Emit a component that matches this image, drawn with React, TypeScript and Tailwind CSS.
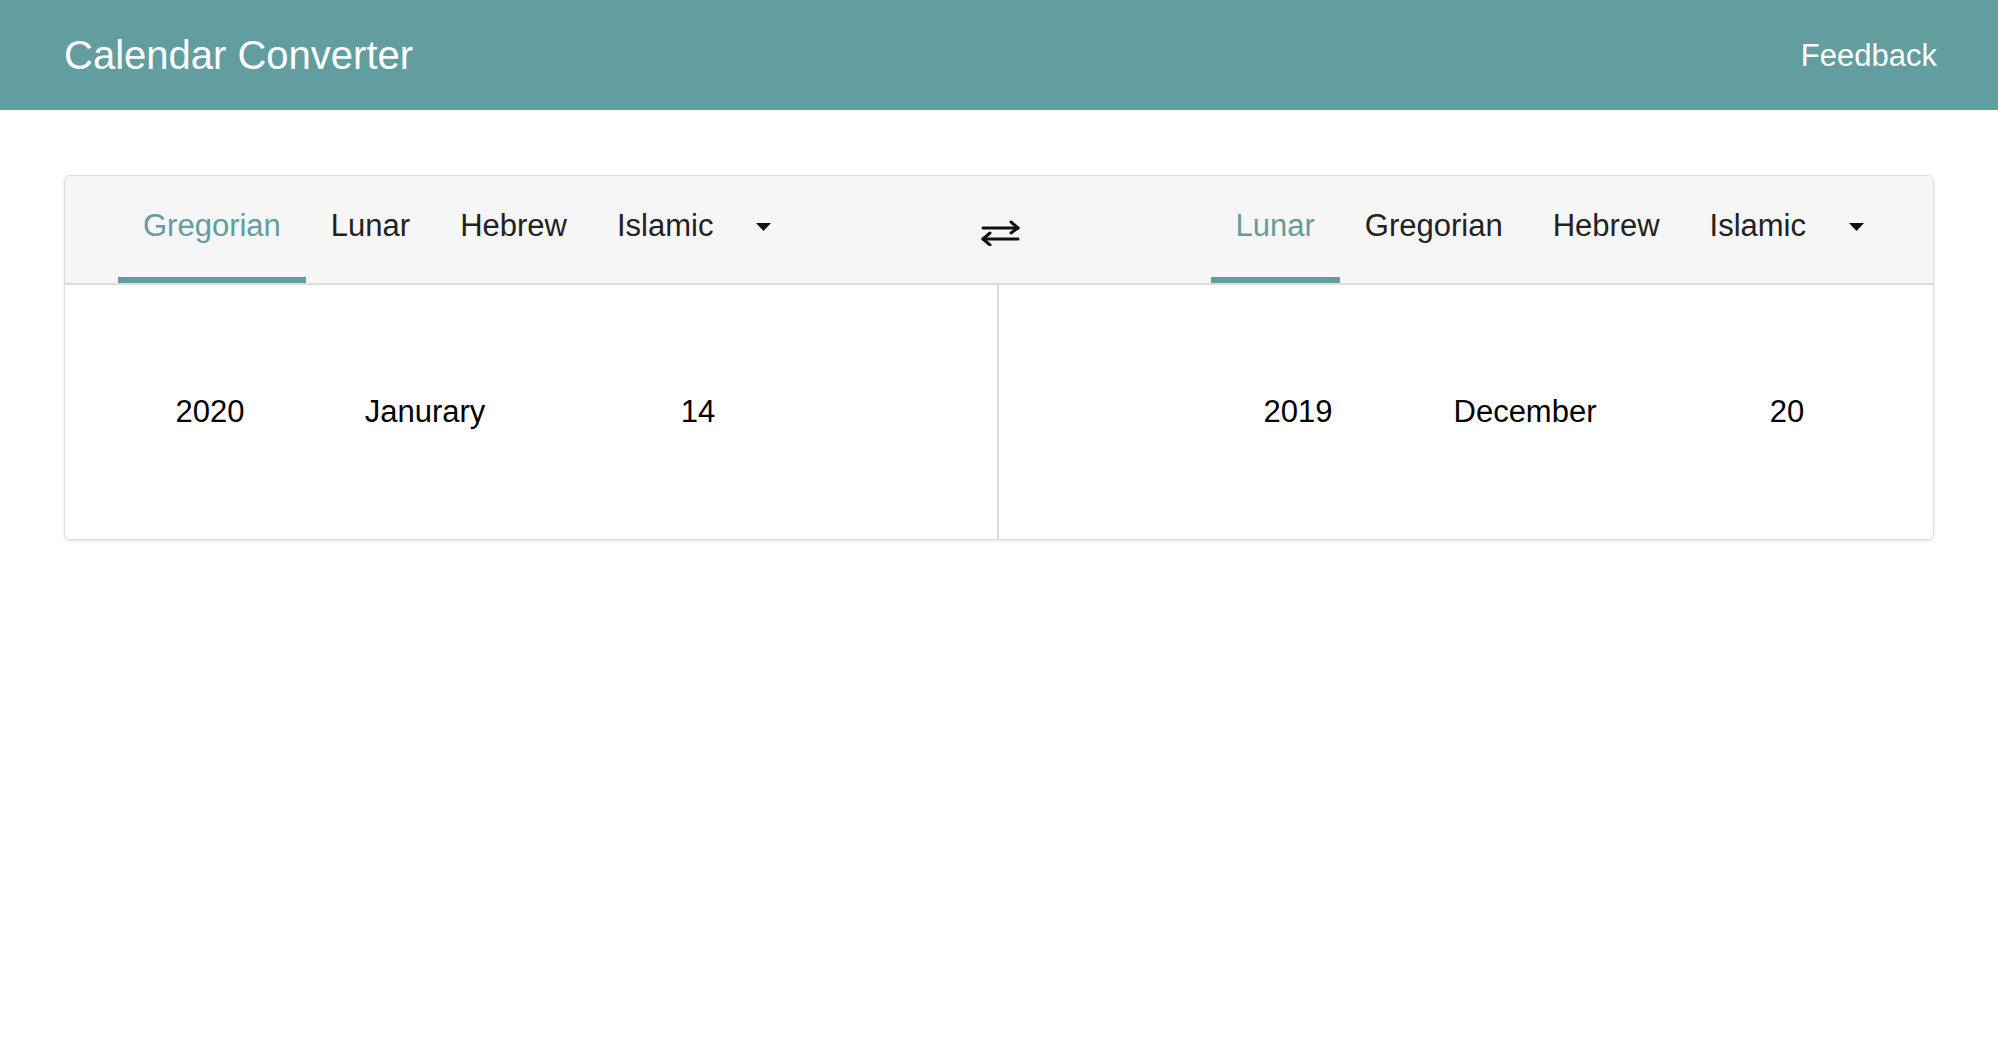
import React from 'react'

function Caret() {
  return (
    <svg width="15" height="8" viewBox="0 0 15 8">
      <polygon points="0,0 15,0 7.5,8" fill="#111" />
    </svg>
  )
}

function SwapIcon() {
  return (
    <svg width="41" height="26" viewBox="0 0 41 26" fill="none" stroke="#111" strokeWidth="3" strokeLinecap="round" strokeLinejoin="round">
      <path d="M3 8 H38" />
      <path d="M31 2 L38 8 L31 13" />
      <path d="M3 19 H38" />
      <path d="M10 13 L3 19 L10 25" />
    </svg>
  )
}

function TabGroup({ tabs }: { tabs: string[] }) {
  return (
    <div className="flex h-full">
      {tabs.map((t, i) => (
        <div
          key={t}
          className={
            i === 0
              ? 'flex items-center px-[25px] border-b-[6px] border-[#629e9f] text-[#629e9f]'
              : 'flex items-center px-[25px] border-b-[6px] border-transparent text-[#222]'
          }
        >
          {t}
        </div>
      ))}
      <div className="flex items-center px-[18px] border-b-[6px] border-transparent">
        <Caret />
      </div>
    </div>
  )
}

export default function App() {
  return (
    <div className="min-h-screen bg-white font-['Liberation_Sans',Arial,sans-serif]">
      <header className="h-[110px] bg-[#629e9f] flex items-center justify-between pl-16 pr-[61px] text-white">
        <h1 className="text-[40px] leading-none">Calendar Converter</h1>
        <a href="#" className="text-[31px] leading-none">
          Feedback
        </a>
      </header>

      <main className="px-16 pt-[65px]">
        <div className="rounded-md border border-[#dcdcdc] shadow-[0_1px_3px_rgba(0,0,0,0.12)] overflow-hidden">
          <div className="h-[109px] bg-[#f6f6f6] border-b-2 border-[#dcdcdc] flex items-stretch justify-between pl-[53px] pr-[51px] text-[31px]">
            <TabGroup tabs={['Gregorian', 'Lunar', 'Hebrew', 'Islamic']} />
            <div className="flex items-center pt-[6px]">
              <SwapIcon />
            </div>
            <TabGroup tabs={['Lunar', 'Gregorian', 'Hebrew', 'Islamic']} />
          </div>

          <div className="grid grid-cols-2 h-[254px] text-[31px] text-black">
            <div className="flex items-center pl-[75px] border-r-2 border-[#dcdcdc]">
              <div className="w-[140px] text-center">2020</div>
              <div className="w-[140px] ml-[75px] text-center">Janurary</div>
              <div className="w-[140px] ml-[133px] text-center">14</div>
            </div>
            <div className="flex items-center pl-[219px]">
              <div className="w-[160px] text-center">2019</div>
              <div className="w-[160px] ml-[67px] text-center">December</div>
              <div className="w-[160px] ml-[102px] text-center">20</div>
            </div>
          </div>
        </div>
      </main>
    </div>
  )
}
